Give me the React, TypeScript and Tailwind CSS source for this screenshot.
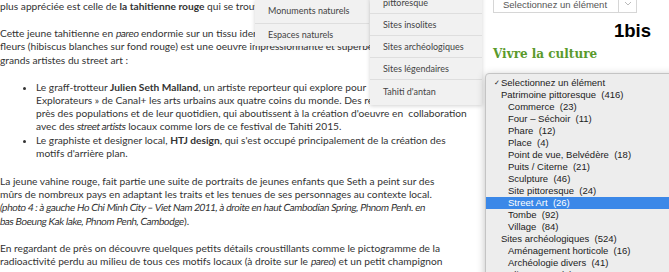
import React from "react";

const lato = { fontFamily: "Lato, 'Open Sans', sans-serif" };

type Opt = { label: string; level: 0 | 1 | 2; checked?: boolean; active?: boolean };

const options: Opt[] = [
  { label: "Selectionnez un élément", level: 0, checked: true },
  { label: "Patrimoine pittoresque  (416)", level: 1 },
  { label: "Commerce  (23)", level: 2 },
  { label: "Four – Séchoir  (11)", level: 2 },
  { label: "Phare  (12)", level: 2 },
  { label: "Place  (4)", level: 2 },
  { label: "Point de vue, Belvédère  (18)", level: 2 },
  { label: "Puits / Citerne  (21)", level: 2 },
  { label: "Sculpture  (46)", level: 2 },
  { label: "Site pittoresque  (24)", level: 2 },
  { label: "Street Art  (26)", level: 2, active: true },
  { label: "Tombe  (92)", level: 2 },
  { label: "Village  (84)", level: 2 },
  { label: "Sites archéologiques  (524)", level: 1 },
  { label: "Aménagement horticole  (16)", level: 2 },
  { label: "Archéologie divers  (41)", level: 2 },
  { label: "Alignement  (9)", level: 2 },
];

function Line({ children }: { children: React.ReactNode }) {
  return <span className="block whitespace-nowrap">{children}</span>;
}

// Lato italic isn't installed, so slant the roman face and tighten it a little
function It({ children }: { children: React.ReactNode }) {
  return (
    <span className="inline-block -skew-x-[9deg] whitespace-pre text-[9.9px] tracking-[-0.4px]">
      {children}
    </span>
  );
}

function Article() {
  return (
    <div
      className="w-[485px] shrink-0 text-[10.2px] leading-[13.2px] text-[#333]"
      style={lato}
    >
      <p className="mb-[14px]">
        <Line>
          plus appréciée est celle de <b>la tahitienne rouge</b> qui se trouve sur le mur du fond
        </Line>
      </p>
      <p className="mb-[14px]">
        <Line>
          Cette jeune tahitienne en <It>pareo</It> endormie sur un tissu identique, entourée de
        </Line>
        <Line>
          fleurs (hibiscus blanches sur fond rouge) est une oeuvre impressionnante et superbe, son
        </Line>
        <Line>grands artistes du street art :</Line>
      </p>
      <ul className="mb-[14px] list-disc pl-[36px]">
        <li>
          <Line>
            Le graff-trotteur <b>Julien Seth Malland</b>, un artiste reporteur qui explore pour
          </Line>
          <Line>
            Explorateurs » de Canal+ les arts urbains aux quatre coins du monde. Des rencontres
          </Line>
          <Line>
            <span className="whitespace-pre">
              près des populations et de leur quotidien, qui aboutissent à la création d'oeuvre en  collaboration
            </span>
          </Line>
          <Line>
            avec des <It>street artists</It> locaux comme lors de ce festival de Tahiti 2015.
          </Line>
        </li>
        <li>
          <Line>
            Le graphiste et designer local, <b>HTJ design</b>, qui s'est occupé principalement de la création des
          </Line>
          <Line>motifs d'arrière plan.</Line>
        </li>
      </ul>
      <p className="mb-[14px] pt-[1px]">
        <Line>
          La jeune vahine rouge, fait partie une suite de portraits de jeunes enfants que Seth a peint sur des
        </Line>
        <Line>
          mûrs de nombreux pays en adaptant les traits et les tenues de ses personnages au contexte local.
        </Line>
        <Line>
          <It>
            (photo 4 : à gauche Ho Chi Minh City – Viet Nam 2011, à droite en haut Cambodian Spring, Phnom Penh. en
          </It>
        </Line>
        <Line>
          <It>bas Boeung Kak lake, Phnom Penh, Cambodge</It>).
        </Line>
      </p>
      <p>
        <Line>
          En regardant de près on découvre quelques petits détails croustillants comme le pictogramme de la
        </Line>
        <Line>
          radioactivité perdu au milieu de tous ces motifs locaux (à droite sur le <It>pareo</It>) et un petit champignon
        </Line>
      </p>
    </div>
  );
}

function SelectBox({ text }: { text?: string }) {
  return (
    <div className="flex h-[27px] w-[144px] border border-[#d6d6d6] bg-white">
      <div
        className="flex-1 pl-[9px] pt-[12px] text-[9.5px] leading-[12px] text-[#555]"
        style={{ fontFamily: "'Liberation Sans', Arial, sans-serif" }}
      >
        {text}
      </div>
      <div className="flex w-[18px] items-start justify-center border-l border-[#d6d6d6] pt-[14px]">
        <svg width="8" height="5" viewBox="0 0 8 5" fill="none">
          <path d="M1 1l3 3 3-3" stroke="#bbb" strokeWidth="1" />
        </svg>
      </div>
    </div>
  );
}

function Sidebar() {
  return (
    <div className="flex flex-1 flex-col pl-[8px]">
      <div className="-mt-[14px]">
        <SelectBox text="Selectionnez un élément" />
      </div>
      <div
        className="mt-[8px] pl-[121px] text-[18.5px] font-bold leading-[20px] text-black"
        style={{ fontFamily: "'Liberation Sans', Arial, sans-serif" }}
      >
        1bis
      </div>
      <div
        className="mt-[5px] text-[12px] font-bold leading-[16px] text-[#5a9a2c]"
        style={{ fontFamily: "'DejaVu Serif', serif" }}
      >
        Vivre la culture
      </div>
      <div className="mt-[12px]">
        <SelectBox />
      </div>
    </div>
  );
}

function MenuItem({ children, last }: { children: React.ReactNode; last?: boolean }) {
  return (
    <div
      className={
        "flex pl-[13px] text-[9px] text-[#444] " +
        (last ? "h-[25px] items-start pt-[5px]" : "h-[22px] items-center border-b border-[#dedede]")
      }
    >
      {children}
    </div>
  );
}

function NativeList() {
  return (
    <div
      className="absolute left-[485px] top-[73px] h-[230px] w-[200px] rounded-tl-[4px] border border-[#c4c4c4] bg-[#ededed] pt-[3px] shadow-[0_2px_8px_rgba(0,0,0,0.25)]"
      style={{ fontFamily: "'Liberation Sans', Arial, sans-serif" }}
    >
      {options.map((o, i) => (
        <div
          key={i}
          className={
            "relative h-[12px] whitespace-pre text-[9.5px] leading-[12px] " +
            (o.active ? "bg-[#3b88e8] text-white" : "text-[#222]") +
            (o.level === 2 ? " pl-[22px]" : " pl-[15px]")
          }
        >
          {o.checked && (
            <span className="absolute left-[8px] top-0 text-[7px] leading-[12px]">✓</span>
          )}
          {o.label}
        </div>
      ))}
    </div>
  );
}

export default function App() {
  return (
    <div className="relative flex h-[272px] w-[669px] overflow-hidden bg-white">
      <Article />
      <Sidebar />

      {/* submenu on the left */}
      <div
        className="absolute left-[255px] top-0 w-[114px] bg-[#f1f1f1] shadow-[0_1px_4px_rgba(0,0,0,0.18)]"
        style={lato}
      >
        <div className="flex h-[23.5px] items-end border-b border-[#dedede] pb-[5px] pl-[13px] text-[9px] text-[#444]">
          Monuments naturels
        </div>
        <div className="flex h-[22px] items-center pl-[13px] text-[9px] text-[#444]">
          Espaces naturels
        </div>
      </div>

      {/* main menu */}
      <div
        className="absolute left-[370px] top-[-20px] w-[112px] bg-[#f1f1f1] shadow-[0_1px_4px_rgba(0,0,0,0.18)]"
        style={lato}
      >
        <div className="flex h-[34px] flex-col justify-end border-b border-[#dedede] pb-[4px] pl-[13px] text-[9px] leading-[13px] text-[#444]">
          <span>Patrimoine</span>
          <span>pittoresque</span>
        </div>
        <MenuItem>Sites insolites</MenuItem>
        <MenuItem>Sites archéologiques</MenuItem>
        <MenuItem>Sites légendaires</MenuItem>
        <MenuItem last>Tahiti d'antan</MenuItem>
      </div>

      <NativeList />
    </div>
  );
}
